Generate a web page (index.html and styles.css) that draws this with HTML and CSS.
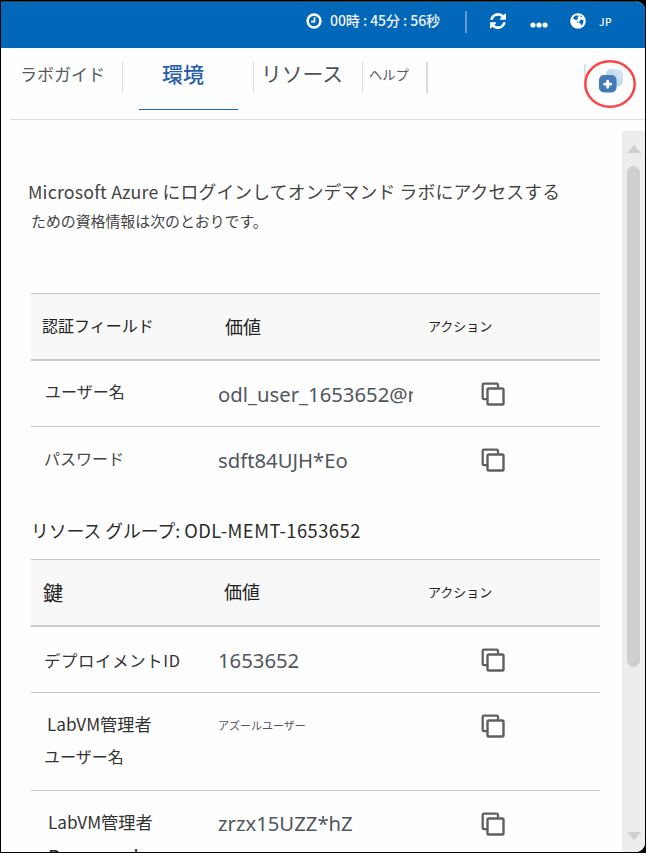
FILE: index.html
```html
<!DOCTYPE html>
<html lang="ja">
<head>
<meta charset="utf-8">
<title>環境</title>
<link rel="stylesheet" href="styles.css">
</head>
<body>
<svg class="defs" aria-hidden="true">
  <symbol id="copy" viewBox="0 0 24 24">
    <path d="M6 17.200H3Q1.700 17.200 1.700 15.900V3Q1.700 1.700 3 1.700H15.700Q17 1.700 17 3V5.700" fill="none" stroke="#606060" stroke-width="2.300"/>
    <rect x="6.500" y="6.500" width="16" height="16" rx="1.300" fill="none" stroke="#606060" stroke-width="2.400"/>
  </symbol>
</svg>
<div class="window">
  <header class="topbar">
    <svg class="clock" viewBox="0 0 16 16"><circle cx="8" cy="8" r="6.4" fill="none" stroke="#fff" stroke-width="2.5"/><path d="M8.5 4.2V8.6H5" fill="none" stroke="#fff" stroke-width="1.6"/></svg>
    <span class="timer">00時 : 45分 : 56秒</span>
    <span class="topline"></span>
    <svg class="refresh" viewBox="0 0 1536 1536"><path fill="#fff" d="M1511 928q0 5-1 7-64 268-268 434.500T764 1536q-146 0-282.500-55T238 1324l-129 129q-19 19-45 19t-45-19-19-45V960q0-26 19-45t45-19h448q26 0 45 19t19 45-19 45l-137 137q71 66 161 102t187 36q134 0 250-65t186-179q11-17 53-117 8-23 30-23h192q13 0 22.500 9.500t9.500 22.500zm25-800v448q0 26-19 45t-45 19h-448q-26 0-45-19t-19-45 19-45l138-138Q969 256 768 256q-134 0-250 65T332 500q-11 17-53 117-8 23-30 23H50q-13 0-22.500-9.500T18 608v-7q65-268 270-434.500T768 0q146 0 284 55.500T1297 212l130-129q19-19 45-19t45 19 19 45z"/></svg>
    <svg class="dots" viewBox="0 0 18 6"><circle cx="3" cy="3" r="2.6"/><circle cx="9" cy="3" r="2.6"/><circle cx="15" cy="3" r="2.6"/></svg>
    <svg class="globe" viewBox="0 0 16 16"><circle cx="8" cy="8" r="7.8" fill="#fff"/><path d="M3.4 4.2L5.6 2.4 8.2 2.6 8.6 4 7.4 4.600 7.900 5.900 6.2 7.2 4.800 6.400 3.600 5.800ZM10.2 7.100L12 6.600 13.600 7.600 13 10.200 11.200 12.400 10.500 10.600 8.900 9.400Z" fill="#0067b9"/><path d="M7 8.700L8.400 9.400M10.200 2.800L12 4" stroke="#0067b9" stroke-width="1"/></svg>
    <span class="lang">JP</span>
  </header>
  <nav class="tabs">
    <span class="tab guide">ラボガイド</span>
    <span class="tab env">環境</span>
    <span class="tab res">リソース</span>
    <span class="tab help">ヘルプ</span>
    <span class="popout">
      <svg viewBox="0 0 54 50"><defs><linearGradient id="sheet" x1="1" y1="0" x2="0" y2="1"><stop offset="0" stop-color="#dceaf5"/><stop offset="1" stop-color="#a9cbe6"/></linearGradient></defs><rect x="23" y="10" width="17" height="17.500" rx="5" fill="url(#sheet)"/><rect x="16" y="16" width="17.500" height="17.500" rx="5" fill="#437ab6"/><path d="M24.700 22.100V28.300M21.600 25.200H27.800" stroke="#fff" stroke-width="2.800" stroke-linecap="round"/><ellipse cx="27" cy="25" rx="24.700" ry="22.700" fill="none" stroke="#fb4346" stroke-width="2.500"/></svg>
    </span>
  </nav>
  <div class="body">
    <main class="content">
      <p class="intro"><span class="first">Microsoft Azure にログインしてオンデマンド ラボにアクセスする</span><span class="second">ための資格情報は次のとおりです。</span></p>
      <section class="table">
        <div class="row head"><span class="auth">認証フィールド</span><span class="worth">価値</span><span class="action">アクション</span></div>
        <div class="row"><span class="label raised near">ユーザー名</span><span class="value">odl_user_1653652@myorg</span><svg class="copy"><use href="#copy"/></svg></div>
        <div class="row last"><span class="label raised light">パスワード</span><span class="value">sdft84UJH*Eo</span><svg class="copy"><use href="#copy"/></svg></div>
      </section>
      <h2>リソース グループ: <span class="group">ODL-MEMT-1653652</span></h2>
      <section class="table">
        <div class="row head"><span class="key">鍵</span><span class="worth second-worth">価値</span><span class="action">アクション</span></div>
        <div class="row"><span class="label deploy">デプロイメントID</span><span class="value">1653652</span><svg class="copy"><use href="#copy"/></svg></div>
        <div class="row tall"><span class="label"><b>LabVM管理者</b><br>ユーザー名</span><span class="value small">アズールユーザー</span><svg class="copy"><use href="#copy"/></svg></div>
        <div class="row tall"><span class="label"><b class="shift">LabVM管理者</b><i>Password</i></span><span class="value">zrzx15UZZ*hZ</span><svg class="copy"><use href="#copy"/></svg></div>
      </section>
    </main>
    <aside class="scrollbar"><span class="up"></span><span class="thumb"></span><span class="down"></span></aside>
  </div>
</div>
</body>
</html>
```
FILE: styles.css
```css
* { box-sizing: border-box; }
body {
  margin: 0;
  background: #000;
  font-family: "Noto Sans CJK JP", sans-serif;
  color: #444;
}
.defs { position: absolute; width: 0; height: 0; }
svg { display: block; flex: none; }
span, h2 { white-space: nowrap; }
.window {
  display: flex;
  flex-direction: column;
  width: 644px;
  height: 851px;
  margin: 1px;
  overflow: hidden;
  background: #fefefe;
  border-top: 1px solid #3b3b40;
  border-radius: 0 9px 9px 0;
}
.topbar {
  display: flex;
  align-items: center;
  flex: none;
  height: 46px;
  padding: 0 0 7px 305px;
  background: #0067b9;
  color: #fff;
}
.clock { width: 16px; height: 16px; margin-top: -1px; }
.timer { width: 111px; margin: -3px 0 0 8px; font-size: 14px; font-weight: 500; letter-spacing: -0.05px; line-height: 20px; color: #f2f2fa; }
.topline { width: 2px; height: 22px; margin: 1px 0 0 24px; background: #6499d0; }
.refresh { width: 16px; height: 16px; margin: -1px 0 0 23px; }
.dots { width: 18px; height: 6px; margin: 7px 0 0 24px; fill: #fff; }
.globe { width: 16px; height: 16px; margin: -1px 0 0 22px; }
.lang { margin-left: 13px; font-size: 10px; font-weight: 500; letter-spacing: 0.6px; }
.tabs {
  display: flex;
  flex: none;
  height: 72px;
  margin-left: 9px;
  padding-top: 14px;
  border-bottom: 1px solid #dedfe1;
  color: #555b61;
}
.tab { height: 31px; line-height: 24px; border-right: 1px solid #dedfe1; }
.guide { width: 113px; padding-left: 10px; font-size: 17px; }
.env {
  width: 99px;
  height: 48px;
  margin: 0 15px 0 16px;
  padding-left: 23px;
  border-right: 0;
  border-bottom: 1px solid #1b6aae;
  font-size: 21px;
  font-weight: 500;
  line-height: 22px;
  color: #275fa9;
}
.res { width: 110px; padding-left: 7px; border-left: 1px solid #dedfe1; font-size: 20.800px; line-height: 22px; color: #4c5258; }
.help { width: 65px; padding-left: 6px; border-right: 2px solid #d8dbde; font-size: 13.300px; line-height: 26px; }
.popout {
  width: 54px;
  height: 50px;
  margin: -3px 0 0 155px;
  background: linear-gradient(#dedfe1, #dedfe1) 1px 5px / 2px 18px no-repeat;
}
.popout svg { width: 54px; height: 50px; }
.body { display: flex; flex: 1; min-height: 0; }
.content { width: 599px; padding: 59px 0 0 30px; overflow: hidden; }
.intro { margin: 0; height: 114px; }
.intro span { display: block; }
.first { margin-left: -3px; font-size: 17.800px; line-height: 24px; letter-spacing: 0.17px; }
.second { margin-top: 6px; font-size: 14.900px; line-height: 24px; }
.table { border-top: 1px solid #c8c8c8; }
.row {
  display: grid;
  grid-template-columns: 187px 195px 1fr;
  align-items: center;
  height: 66px;
  border-bottom: 1px solid #c8c8c8;
}
.head { height: 67px; border-bottom: 2px solid #ccc9ca; background: #f8f8f8; color: #222; }
.row.last { border-bottom: 0; }
.auth { padding: 0 0 3px 11px; font-size: 16px; }
.key { padding: 0 0 1px 12px; font-size: 20px; }
.worth { padding: 0 0 2px 7px; font-size: 18px; }
.second-worth { padding: 0 0 4px 6px; }
.action { padding: 0 0 2px 15px; font-size: 13px; }
.label { padding-left: 13px; font-size: 16px; line-height: 32px; color: #333; }
.raised { padding-bottom: 5px; }
.near { padding-left: 14px; }
.light { color: #444; }
.deploy { font-size: 16.400px; letter-spacing: 0.65px; }
.value { overflow: hidden; font-family: "Noto Sans", sans-serif; font-size: 20.300px; line-height: 32px; color: #50565e; }
.value.small { font-family: "Noto Sans CJK JP", sans-serif; font-size: 11px; }
.copy { width: 24px; height: 24px; margin-left: 68px; }
h2 { height: 66px; margin: 0; padding: 23px 0 0; font-size: 17.800px; font-weight: 400; line-height: 28px; color: #2b2b2b; }
.group { font-size: 18.300px; letter-spacing: 0.5px; }
.row.tall { align-items: start; height: 98px; padding-top: 15px; }
.tall .copy { margin-top: 6px; }
.tall .value { margin-top: 1px; }
.label b { padding-left: 3px; font-weight: 400; font-size: 17.200px; }
.label .shift { padding-left: 4px; }
.label i { display: block; padding: 3px 0 0 4px; font: 400 20px/32px "Noto Sans", sans-serif; color: #222; }
.scrollbar {
  display: flex;
  flex-direction: column;
  align-items: center;
  width: 23px;
  margin: 11px 0 0 22px;
  padding-top: 14px;
  background: #ededed;
}
.content, .scrollbar { flex: none; }
.up, .down { width: 0; border: 7.500px solid transparent; }
.up { border-top: 0; border-bottom: 8px solid #d0d0d0; }
.thumb { width: 13px; height: 501px; margin-top: 13px; border-radius: 7px; background: #cfcfcf; }
.down { margin-top: 165px; border-bottom: 0; border-top: 8px solid #d0d0d0; }
```
